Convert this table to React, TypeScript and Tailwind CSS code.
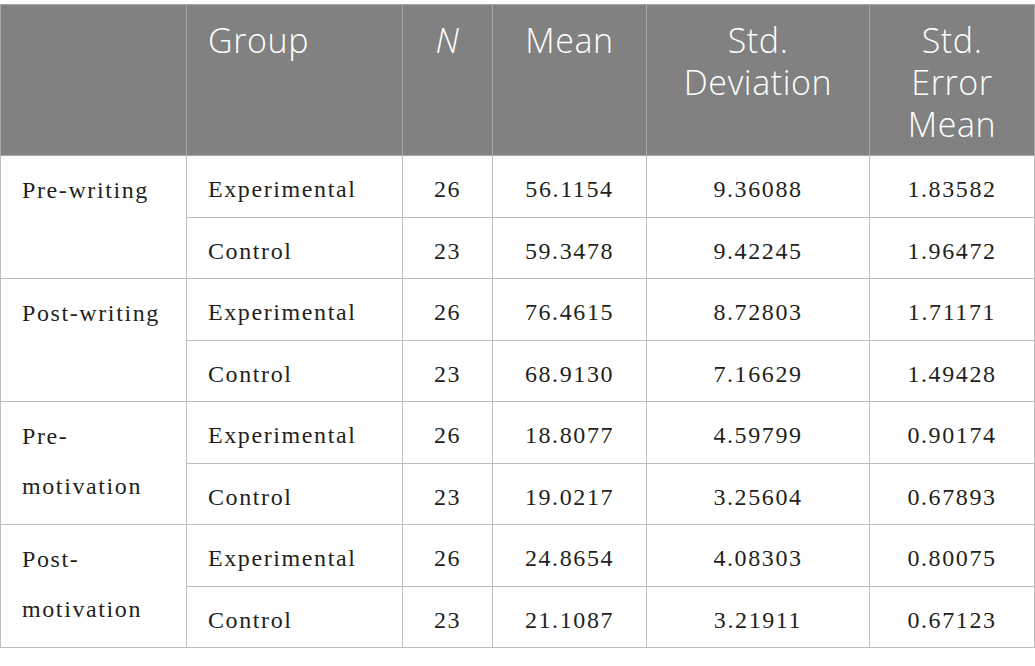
import React from "react";

type Row = {
  group: string;
  n: string;
  mean: string;
  sd: string;
  se: string;
};

type Block = {
  label: React.ReactNode;
  rows: Row[];
};

const blocks: Block[] = [
  {
    label: "Pre-writing",
    rows: [
      { group: "Experimental", n: "26", mean: "56.1154", sd: "9.36088", se: "1.83582" },
      { group: "Control", n: "23", mean: "59.3478", sd: "9.42245", se: "1.96472" },
    ],
  },
  {
    label: "Post-writing",
    rows: [
      { group: "Experimental", n: "26", mean: "76.4615", sd: "8.72803", se: "1.71171" },
      { group: "Control", n: "23", mean: "68.9130", sd: "7.16629", se: "1.49428" },
    ],
  },
  {
    label: (
      <>
        Pre-
        <br />
        motivation
      </>
    ),
    rows: [
      { group: "Experimental", n: "26", mean: "18.8077", sd: "4.59799", se: "0.90174" },
      { group: "Control", n: "23", mean: "19.0217", sd: "3.25604", se: "0.67893" },
    ],
  },
  {
    label: (
      <>
        Post-
        <br />
        motivation
      </>
    ),
    rows: [
      { group: "Experimental", n: "26", mean: "24.8654", sd: "4.08303", se: "0.80075" },
      { group: "Control", n: "23", mean: "21.1087", sd: "3.21911", se: "0.67123" },
    ],
  },
];

const th =
  "border border-[#a9a9a9] align-top pt-[14px] text-[34px] leading-[42px] font-light tracking-[0.6px] text-white";
const td =
  "border border-[#bdbdbd] align-top pt-[19px] leading-[28px] h-[61.5px]";

export default function App() {
  return (
    <div className="w-[1035px] h-[666px] bg-white pt-[4px]">
      <table className="table-fixed border-collapse w-[1034px] text-[#231f20]">
        <colgroup>
          <col className="w-[186px]" />
          <col className="w-[216px]" />
          <col className="w-[90px]" />
          <col className="w-[154px]" />
          <col className="w-[223px]" />
          <col className="w-[165px]" />
        </colgroup>
        <thead className="bg-[#808180] font-['Open_Sans',sans-serif]">
          <tr className="h-[151px]">
            <th className={th}></th>
            <th className={`${th} text-left pl-[21px]`}>Group</th>
            <th className={`${th} text-center italic`}>N</th>
            <th className={`${th} text-center`}>Mean</th>
            <th className={`${th} text-center`}>
              Std.
              <br />
              Deviation
            </th>
            <th className={`${th} text-center`}>
              Std.
              <br />
              Error
              <br />
              Mean
            </th>
          </tr>
        </thead>
        <tbody className="font-['Liberation_Serif',serif] text-[24px] tracking-[1.6px]">
          {blocks.map((block, bi) =>
            block.rows.map((row, ri) => (
              <tr key={`${bi}-${ri}`}>
                {ri === 0 && (
                  <td
                    rowSpan={2}
                    className="border border-[#bdbdbd] align-top pt-[9px] pl-[21px] leading-[50px] whitespace-nowrap"
                  >
                    {block.label}
                  </td>
                )}
                <td className={`${td} pl-[21px] text-left`}>{row.group}</td>
                <td className={`${td} text-center`}>{row.n}</td>
                <td className={`${td} text-center`}>{row.mean}</td>
                <td className={`${td} text-center`}>{row.sd}</td>
                <td className={`${td} text-center`}>{row.se}</td>
              </tr>
            ))
          )}
        </tbody>
      </table>
    </div>
  );
}
